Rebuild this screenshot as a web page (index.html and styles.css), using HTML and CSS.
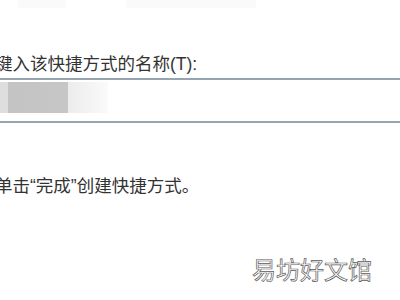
FILE: index.html
```html
<!DOCTYPE html>
<html lang="zh-CN">
<head>
    <meta charset="UTF-8">
    <title>创建快捷方式</title>
    <link rel="stylesheet" href="styles.css">
</head>
<body>
<div class="page">
    <div class="title-ghost">
        <span class="ghost-a"></span>
        <span class="ghost-b"></span>
    </div>
    <div class="wizard">
        <label class="field-label" for="shortcutName">键入该快捷方式的名称(T):</label>
        <div class="name-box" id="shortcutName">
            <span class="blur-dark"></span>
            <span class="blur-light"></span>
        </div>
        <p class="hint">单击“完成”创建快捷方式。</p>
    </div>
    <div class="watermark">易坊好文馆</div>
</div>
</body>
</html>
```

FILE: styles.css
```css
html, body {
    margin: 0;
    background: #fff;
}
.page {
    position: relative;
    width: 400px;
    height: 300px;
    overflow: hidden;
    font-family: "Liberation Sans", "Noto Sans CJK SC", sans-serif;
    color: #333;
}
.title-ghost {
    display: flex;
    gap: 60px;
    height: 12px;
    padding-left: 18px;
}
.title-ghost span {
    display: block;
    height: 8px;
    background: #fafafa;
}
.ghost-a {
    width: 48px;
}
.ghost-b {
    width: 130px;
}
.wizard {
    margin-left: -5px;
    padding-top: 41px;
}
.field-label {
    display: block;
    font-size: 17.5px;
    line-height: 22px;
}
.name-box {
    display: flex;
    margin: 3px -10px 0 0;
    height: 39px;
    border-top: 2px solid #97a5b0;
    border-bottom: 2px solid #97a5b0;
    padding-top: 2px;
}
.blur-dark {
    width: 73px;
    height: 31px;
    background: linear-gradient(90deg, #dedede 0, #dedede 13px, #c4c4c4 13px, #c6c6c6 100%);
}
.blur-light {
    width: 40px;
    height: 31px;
    background: linear-gradient(90deg, #ececec, #fafafa);
}
.hint {
    margin: 52px 0 0;
    font-size: 17.5px;
    line-height: 22px;
}
.watermark {
    position: absolute;
    left: 252px;
    top: 254px;
    font-family: "Noto Sans CJK SC", sans-serif;
    font-size: 24px;
    line-height: 30px;
    color: #fff;
    -webkit-text-stroke: 0.7px #5a5a5a;
}
```
